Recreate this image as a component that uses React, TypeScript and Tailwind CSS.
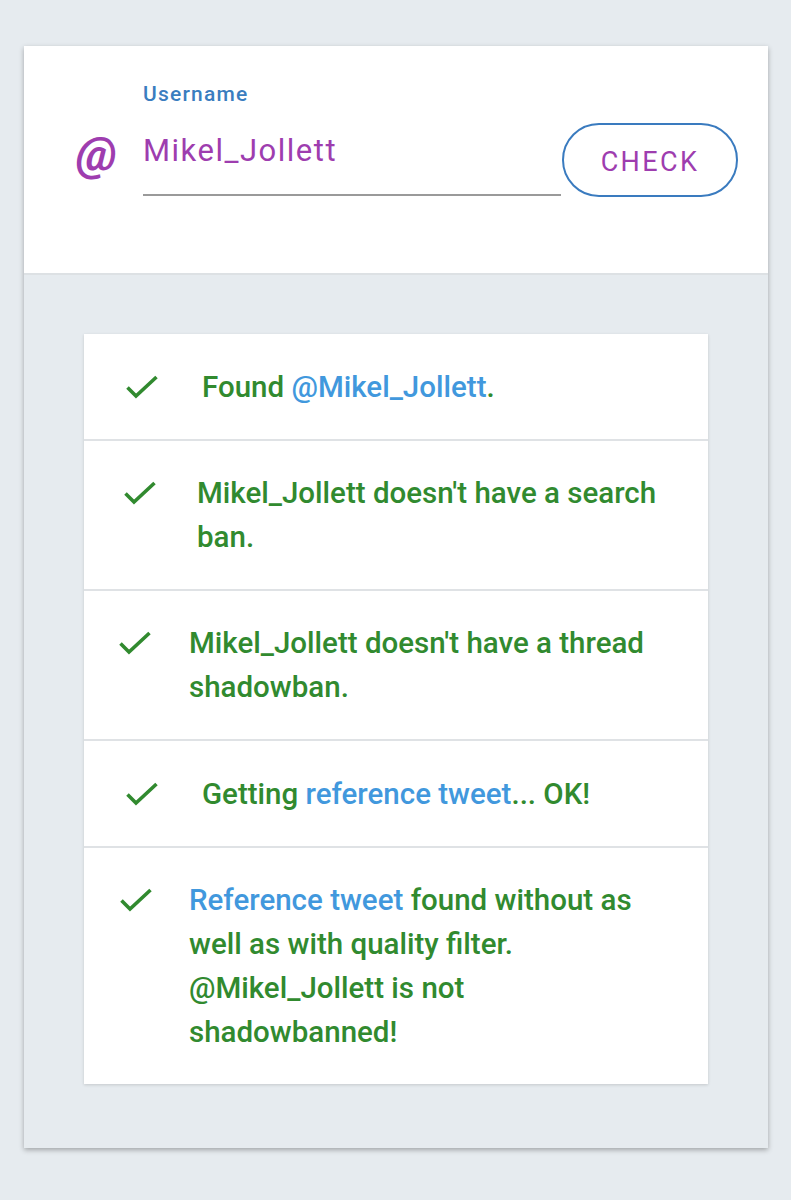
import React from "react";

const Check = () => (
  <svg width="34" height="26" viewBox="0 0 34 26" fill="none">
    <path d="M2.5 13.5 L11 22 L31.5 3" stroke="#318a2f" strokeWidth="3.6" strokeLinecap="butt" strokeLinejoin="miter" />
  </svg>
);

const G = "text-[#318a2f]";
const B = "text-[#4198dd]";

function Row({ pl, gap, pt, children, last }: { pl: string; gap: string; pt: string; children: React.ReactNode; last?: boolean }) {
  return (
    <div className={`flex items-start pb-[30px] pr-[33px] ${pt} ${pl} ${last ? "" : "border-b-2 border-[#dfe2e5]"}`}>
      <div className={`h-[44px] w-[34px] shrink-0 flex items-center justify-center ${gap}`}>
        <Check />
      </div>
      <div className={`flex-1 text-[29.5px] leading-[44px] font-medium ${G}`}>{children}</div>
    </div>
  );
}

export default function App() {
  return (
    <div className="min-h-[1200px] bg-[#e6ebef] pt-[46px] px-[24px]" style={{ fontFamily: "Roboto, 'Noto Sans', sans-serif" }}>
      <div className="w-[744px] bg-[#e6ebef] shadow-[0_2px_5px_rgba(0,0,0,0.3)]">
        <div className="bg-white pt-[36px] pb-[77px] pl-[52px] pr-[30px] flex items-end border-b-2 border-[#dde1e4]">
          <div className="w-[41px] mr-[26px] self-end mb-[19px] text-[47px] leading-[47px] font-bold italic text-[#9e3daf]">@</div>
          <div className="flex-1 flex flex-col">
            <div className="text-[21px] leading-[25px] tracking-[1.2px] font-medium text-[#3a7dbf]">Username</div>
            <div className="mt-[26px] text-[31px] leading-[36px] tracking-[1.5px] text-[#9e3daf] pb-[25px] border-b-2 border-[#9a9a9a]">Mikel_Jollett</div>
          </div>
          <div className="ml-[1px] -mb-[1px] w-[176px] h-[74px] rounded-full border-2 border-[#3a7bbf] flex items-center justify-center pt-[4px] text-[27px] tracking-[2.4px] text-[#9e3daf]">
            CHECK
          </div>
        </div>
        <div className="pt-[59px] pb-[64px] px-[60px]">
          <div className="bg-white shadow-[0_1px_3px_rgba(0,0,0,0.15)]">
            <Row pt="pt-[31px]" pl="pl-[41px]" gap="mr-[43px]">
              Found <span className={B}>@Mikel_Jollett</span>.
            </Row>
            <Row pt="pt-[30px]" pl="pl-[39px]" gap="mr-[40px]">
              Mikel_Jollett doesn't have a search ban.
            </Row>
            <Row pt="pt-[30px]" pl="pl-[34px]" gap="mr-[37px]">
              Mikel_Jollett doesn't have a thread shadowban.
            </Row>
            <Row pt="pt-[31px]" pl="pl-[41px]" gap="mr-[43px]">
              Getting <span className={B}>reference tweet</span>... OK!
            </Row>
            <Row pt="pt-[30px]" pl="pl-[35px]" gap="mr-[36px]" last>
              <span className={B}>Reference tweet</span> found without as well as with quality filter. @Mikel_Jollett is not shadowbanned!
            </Row>
          </div>
        </div>
      </div>
    </div>
  );
}
